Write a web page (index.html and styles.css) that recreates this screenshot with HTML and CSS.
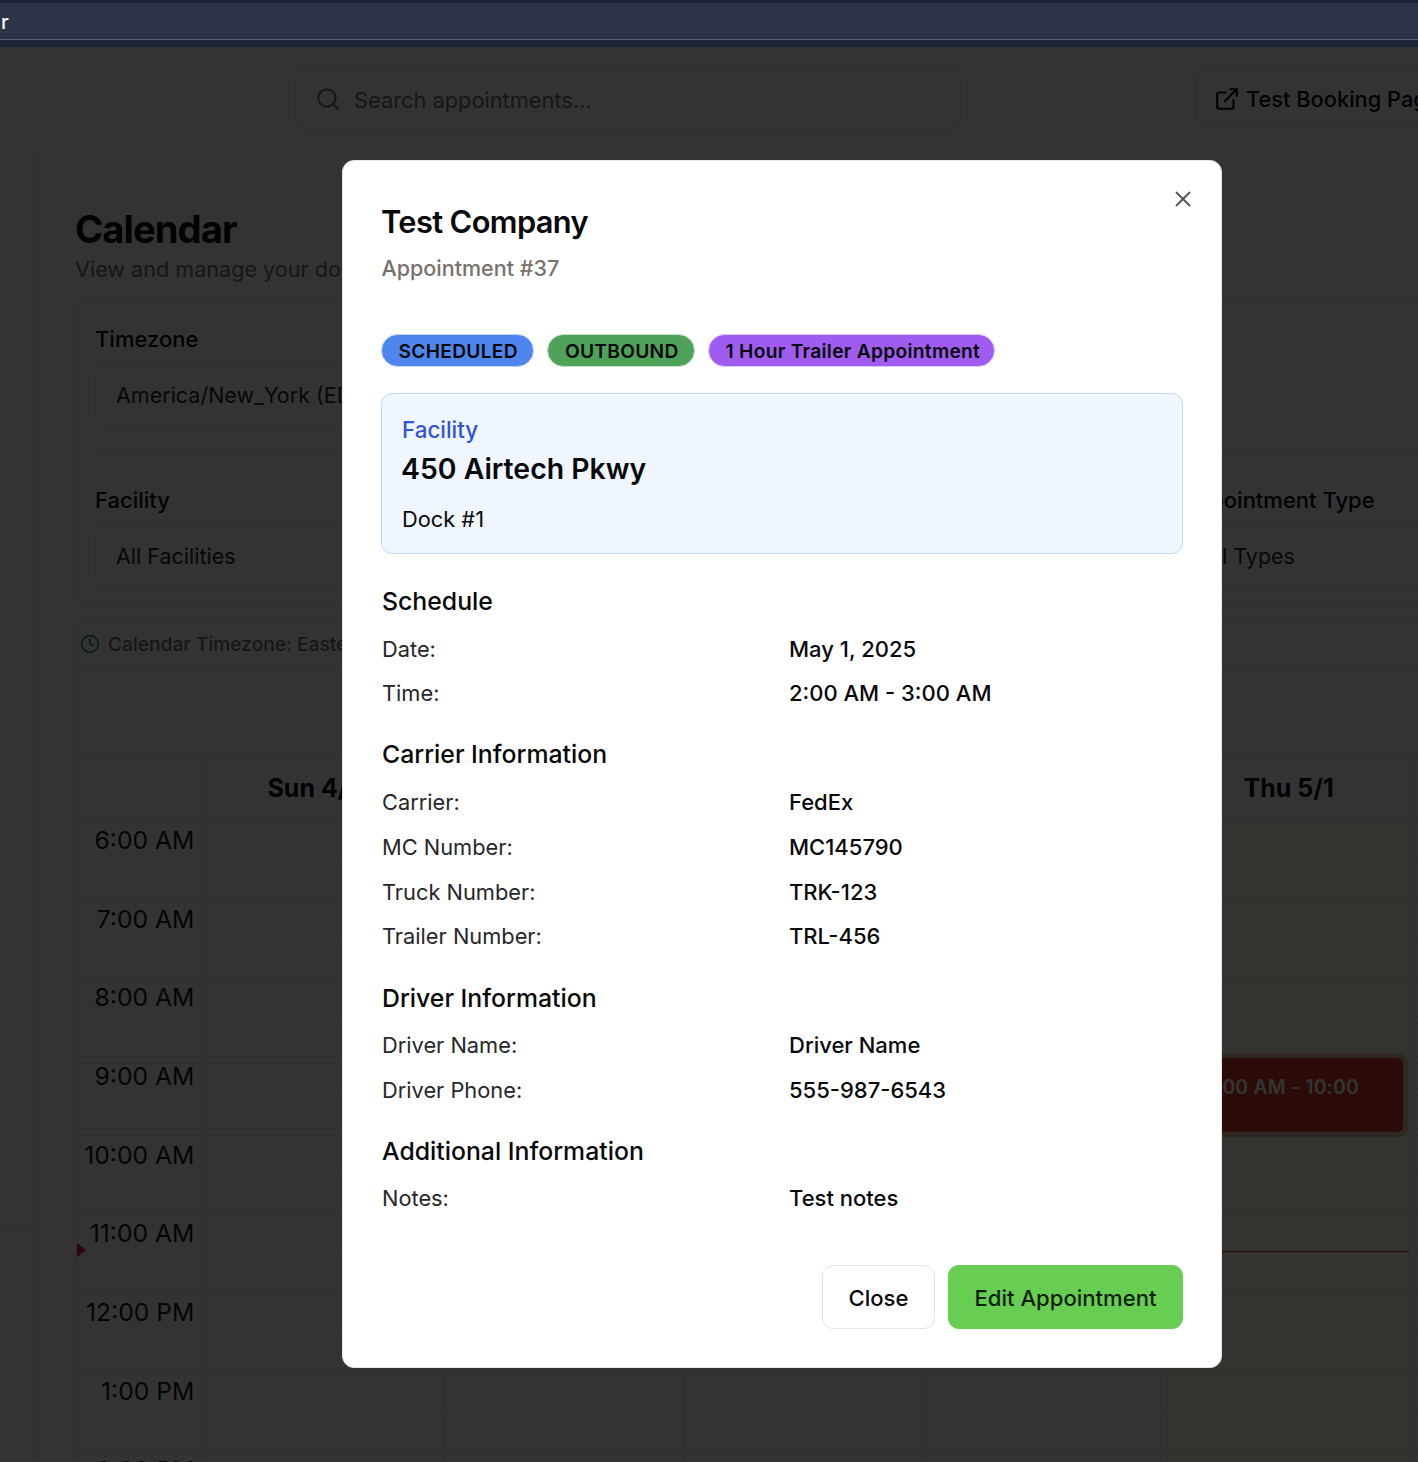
FILE: index.html
```html
<!DOCTYPE html>
<html lang="en">
<head>
<meta charset="utf-8">
<title>Calendar</title>
<link rel="stylesheet" href="styles.css">
</head>
<body>
<div class="page">
  <header class="topbar"><div class="topbar-inner"><span class="brand">.r</span></div></header>
  <div class="toolbar">
    <div class="search">
      <svg class="search-icon" viewBox="0 0 24 24" fill="none" stroke="currentColor" stroke-width="2" stroke-linecap="round" stroke-linejoin="round"><circle cx="11" cy="11" r="8"/><path d="m21 21-4.3-4.3"/></svg>
      <span>Search appointments...</span>
    </div>
    <div class="test-btn">
      <svg class="test-icon" viewBox="0 0 24 24" fill="none" stroke="currentColor" stroke-width="2" stroke-linecap="round" stroke-linejoin="round"><path d="M18 13v6a2 2 0 0 1-2 2H5a2 2 0 0 1-2-2V8a2 2 0 0 1 2-2h6"/><path d="M15 3h6v6"/><path d="M10 14 21 3"/></svg>
      <span>Test Booking Page</span>
    </div>
  </div>
  <div class="layout">
    <aside class="sidebar"></aside>
    <main class="panel">
      <h1 class="page-title">Calendar</h1>
      <p class="page-sub">View and manage your dock appointments</p>
      <section class="filters">
        <div class="filter-row filter-row-top">
          <div class="filter">
            <div class="filter-label">Timezone</div>
            <div class="select">America/New_York (EDT)</div>
          </div>
        </div>
        <div class="filter-row filter-row-bottom">
          <div class="filter">
            <div class="filter-label">Facility</div>
            <div class="select">All Facilities</div>
          </div>
          <div class="filter filter-right">
            <div class="filter-label">Appointment Type</div>
            <div class="select">All Types</div>
          </div>
        </div>
      </section>
      <section class="calendar">
        <div class="cal-head">
          <svg class="clock" viewBox="0 0 24 24" fill="none" stroke="currentColor" stroke-width="2" stroke-linecap="round" stroke-linejoin="round"><circle cx="12" cy="12" r="10"/><path d="M12 6v6l4 2"/></svg>
          <span>Calendar Timezone: Eastern Daylight Time</span>
        </div>
        <div class="cal-spacer"></div>
        <div class="grid">
          <div class="grid-head">
            <div class="time-cell"></div>
            <div class="day-head">Sun 4/27</div>
            <div class="day-head">Mon 4/28</div>
            <div class="day-head">Tue 4/29</div>
            <div class="day-head">Wed 4/30</div>
            <div class="day-head">Thu 5/1</div>
            <div class="day-head">Fri 5/2</div>
          </div>
          <div class="row"><div class="time-cell">6:00 AM</div><div class="cell"></div><div class="cell"></div><div class="cell"></div><div class="cell"></div><div class="cell today"></div><div class="cell"></div></div>
          <div class="row"><div class="time-cell">7:00 AM</div><div class="cell"></div><div class="cell"></div><div class="cell"></div><div class="cell"></div><div class="cell today"></div><div class="cell"></div></div>
          <div class="row"><div class="time-cell">8:00 AM</div><div class="cell"></div><div class="cell"></div><div class="cell"></div><div class="cell"></div><div class="cell today"></div><div class="cell"></div></div>
          <div class="row"><div class="time-cell">9:00 AM</div><div class="cell"></div><div class="cell"></div><div class="cell"></div><div class="cell"></div><div class="cell today"><div class="event">9:00 AM - 10:00</div></div><div class="cell"></div></div>
          <div class="row"><div class="time-cell">10:00 AM</div><div class="cell"></div><div class="cell"></div><div class="cell"></div><div class="cell"></div><div class="cell today"></div><div class="cell"></div></div>
          <div class="row"><div class="time-cell">11:00 AM</div><div class="cell"></div><div class="cell"></div><div class="cell"></div><div class="cell"></div><div class="cell today"><div class="now-line"></div></div><div class="cell"></div><div class="now-marker"></div></div>
          <div class="row"><div class="time-cell">12:00 PM</div><div class="cell"></div><div class="cell"></div><div class="cell"></div><div class="cell"></div><div class="cell today"></div><div class="cell"></div></div>
          <div class="row"><div class="time-cell">1:00 PM</div><div class="cell"></div><div class="cell"></div><div class="cell"></div><div class="cell"></div><div class="cell today"></div><div class="cell"></div></div>
          <div class="row"><div class="time-cell">2:00 PM</div><div class="cell"></div><div class="cell"></div><div class="cell"></div><div class="cell"></div><div class="cell today"></div><div class="cell"></div></div>
        </div>
      </section>
    </main>
  </div>
</div>

<div class="overlay"></div>
<div class="modal-wrap">
  <div class="modal" role="dialog">
    <button class="modal-x" aria-label="Close">
      <svg viewBox="0 0 24 24" fill="none" stroke="currentColor" stroke-width="1.7" stroke-linecap="round" stroke-linejoin="round"><path d="M18 6 6 18"/><path d="m6 6 12 12"/></svg>
    </button>
    <h2 class="modal-title">Test Company</h2>
    <p class="modal-sub">Appointment #37</p>
    <div class="badges">
      <span class="badge badge-blue">SCHEDULED</span>
      <span class="badge badge-green">OUTBOUND</span>
      <span class="badge badge-purple">1 Hour Trailer Appointment</span>
    </div>
    <div class="facility">
      <div class="facility-label">Facility</div>
      <div class="facility-name">450 Airtech Pkwy</div>
      <div class="facility-dock">Dock #1</div>
    </div>
    <section class="info">
      <h3>Schedule</h3>
      <div class="info-row"><span>Date:</span><span>May 1, 2025</span></div>
      <div class="info-row"><span>Time:</span><span>2:00 AM - 3:00 AM</span></div>
    </section>
    <section class="info">
      <h3>Carrier Information</h3>
      <div class="info-row"><span>Carrier:</span><span>FedEx</span></div>
      <div class="info-row"><span>MC Number:</span><span>MC145790</span></div>
      <div class="info-row"><span>Truck Number:</span><span>TRK-123</span></div>
      <div class="info-row"><span>Trailer Number:</span><span>TRL-456</span></div>
    </section>
    <section class="info">
      <h3>Driver Information</h3>
      <div class="info-row"><span>Driver Name:</span><span>Driver Name</span></div>
      <div class="info-row"><span>Driver Phone:</span><span>555-987-6543</span></div>
    </section>
    <section class="info">
      <h3>Additional Information</h3>
      <div class="info-row"><span>Notes:</span><span>Test notes</span></div>
    </section>
    <div class="actions">
      <button class="btn btn-outline">Close</button>
      <button class="btn btn-green">Edit Appointment</button>
    </div>
  </div>
</div>
</body>
</html>
```

FILE: styles.css
```css
* { box-sizing: border-box; }
html, body { margin: 0; padding: 0; height: 100%; overflow: hidden; background: #fff; }
body { font-family: Inter, "Liberation Sans", sans-serif; color: #09090b; }
h1, h2, h3, p { margin: 0; }

.page { width: 1418px; height: 1462px; overflow: hidden; }

.topbar { position: relative; z-index: 20; height: 47px; background: #1c2438; padding-top: 3px; }
.topbar-inner { height: 37px; background: #2d3348; border-bottom: 1px solid #585f76; display: flex; align-items: center; overflow: hidden; padding-top: 2px; }
.brand { color: #fff; font-size: 20px; font-weight: 500; margin-left: -5px; }

.toolbar { height: 103px; padding: 20px 0 0 295px; display: flex; align-items: flex-start; gap: 234px; width: 1700px; }
.search { width: 666px; height: 63px; border: 1px solid #e4e4e7; border-radius: 11px; display: flex; align-items: center; gap: 13px; padding: 3px 0 0 19px; color: #71717a; font-size: 21.8px; }
.search-icon { width: 26px; height: 26px; flex: none; margin-top: -3px; }
.test-btn { margin-top: 3px; height: 57px; width: 300px; border: 1px solid #e4e4e7; border-radius: 11px; display: flex; align-items: center; gap: 6px; padding: 0 0 0 18px; font-size: 21.8px; font-weight: 500; white-space: nowrap; }
.test-icon { width: 26px; height: 26px; flex: none; }

.layout { display: flex; align-items: flex-start; width: 1800px; }
.sidebar { width: 38px; flex: none; height: 1063px; margin-top: 13px; border-top: 1px solid #f0f0f2; border-bottom: 1px solid #e4e4e7; background: #fff; }
.panel { flex: none; width: 1500px; border-top: 1px solid #f0f0f2; border-left: 1px solid #ececef; padding: 55px 0 0 38px; margin-left: -1px; background: #fff; }
.page-title { font-size: 38.2px; line-height: 46px; font-weight: 700; letter-spacing: -0.95px; margin-left: -1px; }
.page-sub { font-size: 21.6px; line-height: 33px; color: #71717a; margin: 1px 0 0 -1px; }

.filters { margin-top: 12px; height: 309px; border: 1px solid #e9e9ec; border-radius: 11px; padding: 0 18px; }
.filter-row { display: flex; height: 155px; padding-top: 24px; }
.filter-row-top { border-bottom: 1px solid #e9e9ec; margin-right: -18px; }
.filter-row-bottom { padding-top: 30px; }
.filter { width: 340px; }
.filter-right { margin-left: 749px; }
.filter-label { font-size: 22px; line-height: 32px; font-weight: 500; margin-bottom: 8px; }
.select { height: 64px; border: 1px solid #e4e4e7; border-radius: 11px; display: flex; align-items: center; padding-left: 20px; font-size: 21.5px; white-space: nowrap; color: #27272a; }

.calendar { margin-top: 14px; border: 1px solid #e9e9ec; border-radius: 11px 11px 0 0; }
.cal-head { height: 44px; border-bottom: 1px solid #e9e9ec; display: flex; align-items: center; gap: 8px; padding-left: 3px; font-size: 19.2px; font-weight: 500; color: #71717a; white-space: nowrap; }
.clock { width: 20px; height: 20px; color: #16a34a; flex: none; }
.cal-spacer { height: 88px; }

.grid { border-top: 1px solid #e4e4e7; position: relative; }
.grid-head { display: grid; grid-template-columns: 125.4px repeat(6, 241.5px); height: 65px; }
.time-cell { border-right: 1px solid #e4e4e7; text-align: right; padding: 3px 7px 0 0; font-size: 24.7px; line-height: 33px; color: #18181b; }
.day-head { border-right: 1px solid #e4e4e7; display: flex; align-items: center; justify-content: center; font-size: 25px; font-weight: 700; white-space: nowrap; }
.row { position: relative; display: grid; grid-template-columns: 125.4px repeat(6, 241.5px); height: 78.7px; border-top: 1px solid #e4e4e7; }
.row::after { content: ""; position: absolute; left: 0; right: 0; top: 37.5px; border-top: 1px dotted #e4e4e7; pointer-events: none; }
.cell { position: relative; border-right: 1px solid #e4e4e7; }
.today { background: #fefce8; }
.event { position: absolute; z-index: 2; left: 8px; right: 6px; top: 1px; height: 74px; background: #d43a28; border-radius: 5px; box-shadow: 0 0 0 5px rgba(215, 65, 40, .3); color: #fff; font-size: 19.4px; font-weight: 600; padding: 17px 0 0 27px; white-space: nowrap; overflow: hidden; letter-spacing: .2px; }
.now-line { position: absolute; z-index: 3; left: 0; right: 0; top: 37px; border-top: 1px solid #dc2626; }
.now-marker { position: absolute; z-index: 3; left: 0; top: 29px; width: 0; height: 0; border-left: 9px solid #dc2626; border-top: 7.5px solid transparent; border-bottom: 7.5px solid transparent; }

.overlay { position: fixed; inset: 47px 0 0 0; background: rgba(0, 0, 0, .8); z-index: 10; }
.modal-wrap { position: fixed; inset: 0; z-index: 30; padding: 160px 0 0 342px; }
.modal { position: relative; width: 880px; height: 1208px; background: #fff; border: 1px solid #e4e4e7; border-radius: 12px; padding: 39px 38px 0 38px; color: #09090b; }
.modal-x { position: absolute; top: 25px; right: 25px; width: 26px; height: 26px; padding: 0; border: 0; background: none; color: #52525b; cursor: pointer; }
.modal-x svg { display: block; width: 26px; height: 26px; }
.modal-title { font-size: 30.8px; line-height: 44px; font-weight: 600; letter-spacing: -0.62px; }
.modal-sub { margin: 8.5px 0 0 .5px; font-size: 21.5px; line-height: 31px; font-weight: 500; color: #78716c; }
.badges { display: flex; margin-top: 50.5px; gap: 13px; }
.badge { height: 33px; border-radius: 17px; display: inline-flex; align-items: center; padding: 0 15.5px 0 16.5px; font-size: 19.2px; font-weight: 600; letter-spacing: .28px; color: #08080a; border: 1px solid #e4e4ea; white-space: nowrap; }
.badge-blue { background: #4f86ee; border-color: #c5d7f8; }
.badge-green { background: #4fa259; border-color: #c5e1c8; }
.badge-purple { background: #a05cf0; border-color: #dfc9f9; padding-right: 14px; }
.facility { margin-top: 26px; height: 161px; border: 1px solid #bfdbfe; border-radius: 11px; background: #eff6ff; padding: 20px 20px 0; }
.facility-label { color: #2f54d8; font-size: 22.4px; line-height: 32px; font-weight: 500; }
.facility-name { font-size: 28.4px; line-height: 40px; font-weight: 600; margin: 3px 0 0 -1px; }
.facility-dock { font-size: 21.8px; line-height: 33px; margin-top: 14px; }
.info { margin-top: 28px; }
.info + .info { margin-top: 24.6px; }
.info h3 { font-size: 24.8px; line-height: 39px; font-weight: 500; margin-bottom: 11.5px; padding-left: 1px; }
.info-row { display: grid; grid-template-columns: 408px 1fr; font-size: 21.8px; line-height: 33.6px; padding-left: 1px; }
.info-row + .info-row { margin-top: 11.2px; }
.info-row span:last-child { font-weight: 500; font-size: 22px; margin-left: -1px; }
.info-row span:first-child { color: #27272a; }
.actions { position: absolute; right: 38px; bottom: 38px; display: flex; gap: 13px; }
.btn { height: 64px; border-radius: 11px; font: 500 22.1px Inter, "Liberation Sans", sans-serif; cursor: pointer; padding-top: 2px; }
.btn-outline { width: 113px; background: #fff; border: 1px solid #e4e4e7; color: #09090b; }
.btn-green { width: 235px; background: #67ce53; border: 0; color: #0f1f0d; }
```
